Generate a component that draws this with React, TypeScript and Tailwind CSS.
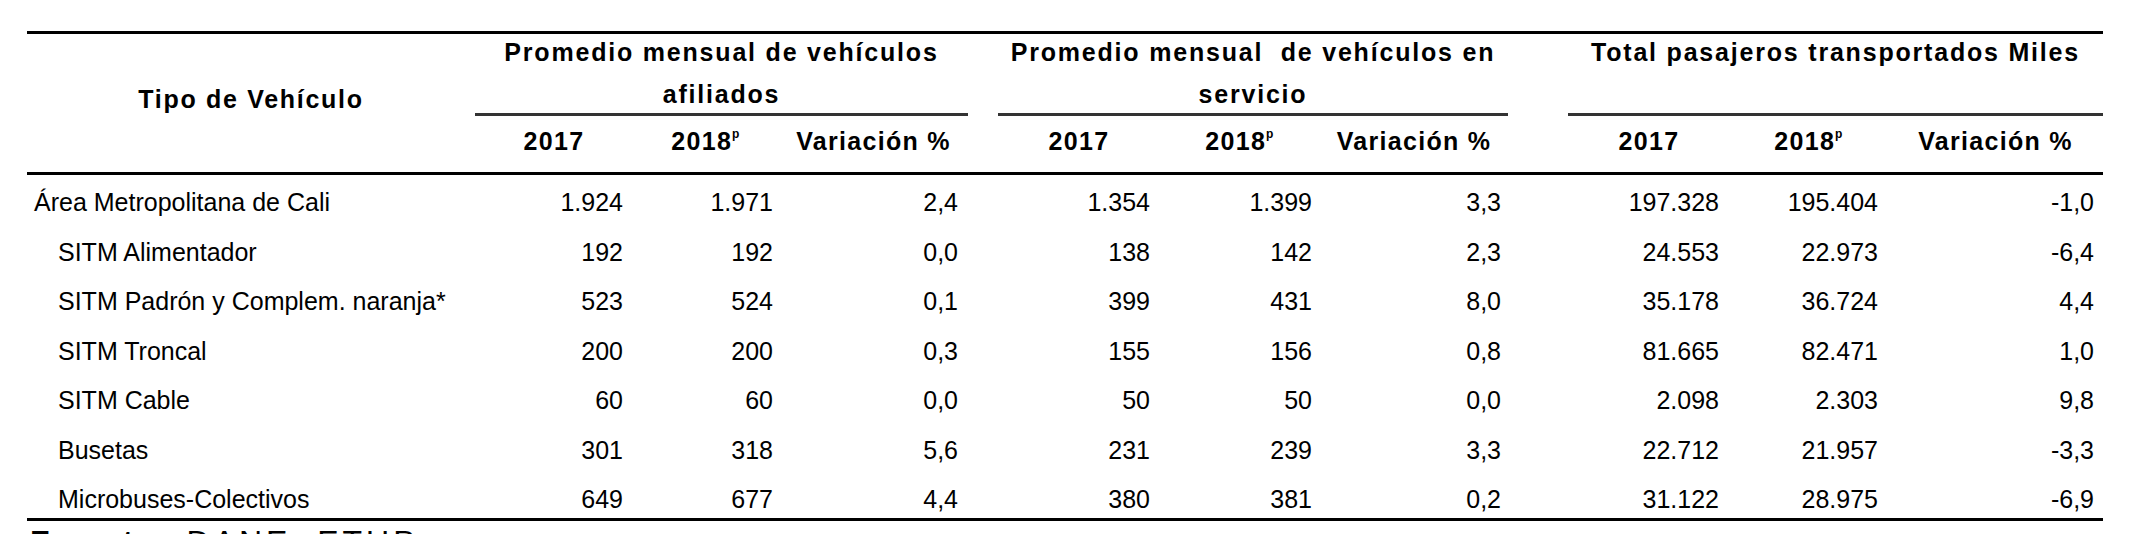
const cols = "grid grid-cols-[448px_158px_146px_189px_30px_162px_160px_188px_60px_162px_158px_215px]"

type Row = { label: string; sub?: boolean; v: string[] }

const rows: Row[] = [
  { label: "Área Metropolitana de Cali", v: ["1.924", "1.971", "2,4", "1.354", "1.399", "3,3", "197.328", "195.404", "-1,0"] },
  { label: "SITM Alimentador", sub: true, v: ["192", "192", "0,0", "138", "142", "2,3", "24.553", "22.973", "-6,4"] },
  { label: "SITM Padrón y Complem. naranja*", sub: true, v: ["523", "524", "0,1", "399", "431", "8,0", "35.178", "36.724", "4,4"] },
  { label: "SITM Troncal", sub: true, v: ["200", "200", "0,3", "155", "156", "0,8", "81.665", "82.471", "1,0"] },
  { label: "SITM Cable", sub: true, v: ["60", "60", "0,0", "50", "50", "0,0", "2.098", "2.303", "9,8"] },
  { label: "Busetas", sub: true, v: ["301", "318", "5,6", "231", "239", "3,3", "22.712", "21.957", "-3,3"] },
  { label: "Microbuses-Colectivos", sub: true, v: ["649", "677", "4,4", "380", "381", "0,2", "31.122", "28.975", "-6,9"] },
]

// right padding per data column, with the empty spacer columns between groups
const pad = ["pr-[10px]", "pr-[6px]", "pr-[10px]", "pr-[10px]", "pr-[8px]", "pr-[7px]", "pr-[11px]", "pr-[10px]", "pr-[9px]"]

function Year({ p }: { p?: boolean }) {
  return (
    <div className="flex items-center justify-center pb-[4px]">
      <span>
        {p ? "2018" : "2017"}
        {p && <sup className="text-[12px] top-[-12px]">p</sup>}
      </span>
    </div>
  )
}

function Var() {
  return <div className="flex items-center justify-center pb-[4px]">Variación %</div>
}

function Group({ children, span }: { children: React.ReactNode; span: string }) {
  return (
    <div className={`${span} h-[82px] border-b-[3px] border-[#333] flex justify-center`}>
      <div className="-mt-[3px] leading-[42px] text-center tracking-[1.8px]">{children}</div>
    </div>
  )
}

export default function App() {
  return (
    <div className="w-[2145px] h-[534px] overflow-hidden bg-white text-black font-['Liberation_Sans',Arial,sans-serif] text-[25px]">
      <div className="pt-[31px] pl-[27px]">
        <div className="w-[2076px]">
          {/* header */}
          <div className={`${cols} grid-rows-[82px_56px] border-t-[3px] border-b-[3px] border-black font-bold tracking-[1.3px]`}>
            <div className="row-span-2 flex items-center justify-center pb-[6px] tracking-[1.7px]">Tipo de Vehículo</div>
            <Group span="col-span-3">
              Promedio mensual de vehículos
              <br />
              afiliados
            </Group>
            <div />
            <Group span="col-span-3">
              Promedio mensual&nbsp; de vehículos en
              <br />
              servicio
            </Group>
            <div />
            <Group span="col-span-3">Total pasajeros transportados Miles</Group>

            <Year />
            <Year p />
            <Var />
            <div />
            <Year />
            <Year p />
            <Var />
            <div />
            <Year />
            <Year p />
            <Var />
          </div>

          {/* body */}
          <div className="h-[346px] pt-[3px] border-b-[3px] border-black">
            {rows.map((r) => (
              <div key={r.label} className={`${cols} h-[49.5px] items-center`}>
                <div className={r.sub ? "pl-[31px] whitespace-nowrap" : "pl-[7px] whitespace-nowrap"}>{r.label}</div>
                {r.v.slice(0, 3).map((x, i) => (
                  <div key={i} className={`text-right ${pad[i]}`}>{x}</div>
                ))}
                <div />
                {r.v.slice(3, 6).map((x, i) => (
                  <div key={i} className={`text-right ${pad[i + 3]}`}>{x}</div>
                ))}
                <div />
                {r.v.slice(6, 9).map((x, i) => (
                  <div key={i} className={`text-right ${pad[i + 6]}`}>{x}</div>
                ))}
              </div>
            ))}
          </div>

          <div className="mt-[5px] pl-[3px] text-[32px] leading-none tracking-[4px]">
            <span className="font-bold">Fuente:</span> DANE, ETUP
          </div>
        </div>
      </div>
    </div>
  )
}
